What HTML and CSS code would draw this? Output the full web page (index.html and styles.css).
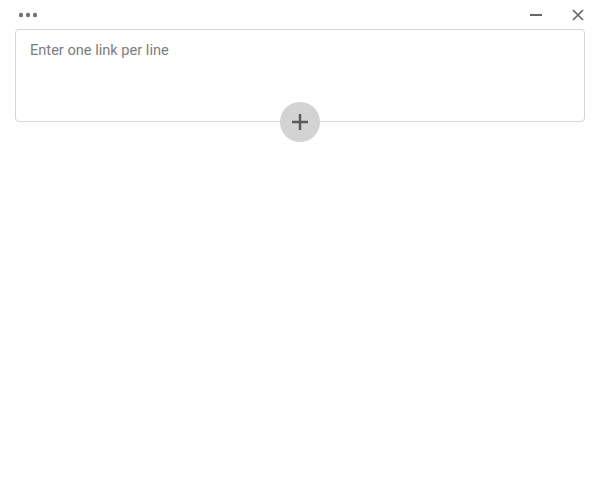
FILE: index.html
```html
<!DOCTYPE html>
<html lang="en">
<head>
  <meta charset="UTF-8">
  <title>Add links</title>
  <link rel="stylesheet" href="styles.css">
</head>
<body>
  <div class="titlebar">
    <button class="icon-btn menu-btn" aria-label="Menu">
      <svg width="18" height="6" viewBox="0 0 18 6"><circle cx="2" cy="3" r="2.2"/><circle cx="9" cy="3" r="2.2"/><circle cx="16" cy="3" r="2.2"/></svg>
    </button>
    <div class="window-controls">
      <button class="icon-btn" aria-label="Minimize">
        <svg width="12" height="12" viewBox="0 0 12 12"><path d="M0 6h12" class="stroke"/></svg>
      </button>
      <button class="icon-btn" aria-label="Close">
        <svg width="12" height="12" viewBox="0 0 12 12"><path d="M1 1l10 10M11 1L1 11" class="stroke thin"/></svg>
      </button>
    </div>
  </div>

  <div class="input-wrap">
    <textarea class="links" placeholder="Enter one link per line"></textarea>
    <button class="add-btn" aria-label="Add">
      <svg width="18" height="18" viewBox="0 0 18 18"><path d="M9 1v16M1 9h16" class="stroke plus"/></svg>
    </button>
  </div>
</body>
</html>
```

FILE: styles.css
```css
html, body {
  margin: 0;
  height: 100%;
}

body {
  font-family: Roboto, Arial, sans-serif;
  background: #fff;
  padding: 0 15px;
  box-sizing: border-box;
}

button {
  border: none;
  background: none;
  padding: 0;
  cursor: pointer;
}

.titlebar {
  height: 29px;
  display: flex;
  align-items: center;
  justify-content: space-between;
}

.menu-btn {
  margin-left: 4px;
}

.window-controls {
  display: flex;
  gap: 30px;
  margin-right: 1px;
}

.icon-btn {
  display: flex;
  fill: #757575;
}

.stroke {
  fill: none;
  stroke: #666;
  stroke-width: 2;
}

.stroke.thin {
  stroke-width: 1.7;
}

.stroke.plus {
  stroke: #5a5a5a;
  stroke-width: 2.4;
}

.input-wrap {
  position: relative;
}

.links {
  display: block;
  width: 100%;
  height: 93px;
  box-sizing: border-box;
  padding: 10px 14px;
  border: 1px solid #d6d6d6;
  border-radius: 4px;
  font-family: inherit;
  font-size: 14.6px;
  line-height: 20px;
  color: #333;
  resize: none;
  outline: none;
}

.links::placeholder {
  color: #7d7d7d;
}

.add-btn {
  position: absolute;
  left: 50%;
  bottom: -20px;
  width: 40px;
  height: 40px;
  margin-left: -20px;
  border-radius: 50%;
  background: #d3d3d3;
  display: flex;
  align-items: center;
  justify-content: center;
}
```
